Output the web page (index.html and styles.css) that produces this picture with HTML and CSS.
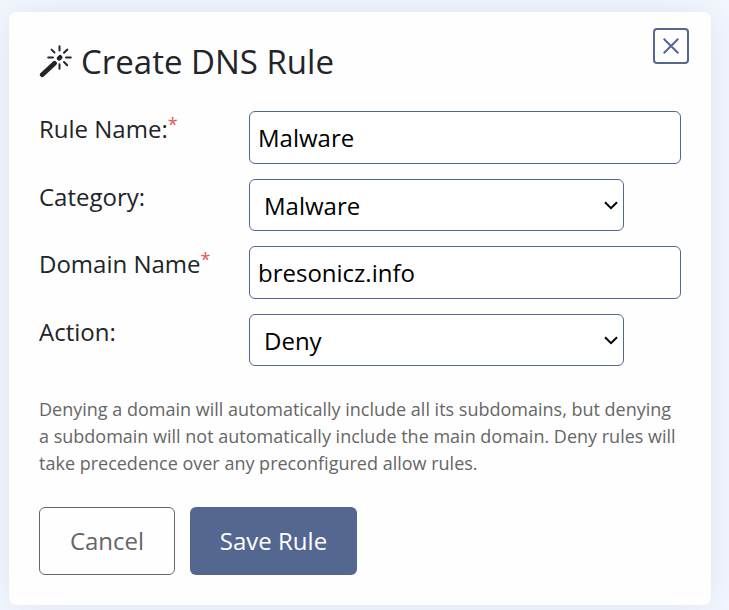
FILE: index.html
```
<!DOCTYPE html>
<html lang="en">
<head>
<meta charset="utf-8">
<title>Create DNS Rule</title>
<link rel="stylesheet" href="styles.css">
</head>
<body>
<main class="dialog">
  <header class="dialog-header">
    <h1 class="title">
      <svg class="wand" viewBox="0 0 34 34" aria-hidden="true">
        <path class="handle" d="M3.2 29.8 15.6 18.2M20.1 13.3l1-1"/>
        <path class="rays" d="M20.5 1.2v4.2M20.5 19.2v4.6M9.2 12.5h4.8M27 12.5h4.8M12.6 4.6l2.9 2.9M28.4 4.6l-3.4 3.2M25 17l3.2 3.2"/>
      </svg>
      <span>Create DNS Rule</span>
    </h1>
    <button class="close" type="button" aria-label="Close">
      <svg class="close-icon" viewBox="0 0 16 16"><path d="M.7.7l14.6 14.6M15.3.7.7 15.3"/></svg>
    </button>
  </header>
  <form class="form">
    <label class="label" for="name">Rule Name:<span class="required">*</span></label>
    <input class="field" id="name" type="text" value="Malware">
    <label class="label" for="category">Category:</label>
    <div class="select-wrap">
      <select class="field select" id="category"><option>Malware</option></select>
      <svg class="chevron" viewBox="0 0 14 9"><path d="M1 1.2l6 6 6-6"/></svg>
    </div>
    <label class="label" for="domain">Domain Name<span class="required">*</span></label>
    <input class="field" id="domain" type="text" value="bresonicz.info">
    <label class="label" for="action">Action:</label>
    <div class="select-wrap">
      <select class="field select" id="action"><option>Deny</option></select>
      <svg class="chevron" viewBox="0 0 14 9"><path d="M1 1.2l6 6 6-6"/></svg>
    </div>
  </form>
  <p class="help">Denying a domain will automatically include all its subdomains, but denying a subdomain will not automatically include the main domain. Deny rules will take precedence over any preconfigured allow rules.</p>
  <footer class="actions">
    <button class="button cancel" type="button">Cancel</button>
    <button class="button save" type="button">Save Rule</button>
  </footer>
</main>
</body>
</html>
```
FILE: styles.css
```
* { box-sizing: border-box; }
body {
  margin: 0;
  height: 610px;
  overflow: hidden;
  padding: 12px 18px 5px 9px;
  background: #f3f7ff;
  font-family: "Open Sans", sans-serif;
  color: #212529;
}
button, input, select { font-family: inherit; margin: 0; }
.dialog {
  height: 593px;
  padding: 16px 30px 30px;
  background: #fefefe;
  border-radius: 8px;
  box-shadow: 0 0 38px rgba(83, 103, 145, .14);
}
.dialog-header {
  display: flex;
  justify-content: space-between;
  height: 83px;
  margin-right: -8px;
}
.title {
  display: flex;
  align-items: flex-start;
  gap: 8px;
  margin: 0;
  padding-top: 11px;
  font-size: 33px;
  line-height: 46px;
  font-weight: 400;
  white-space: nowrap;
}
.wand { width: 34px; height: 34px; margin-top: 6px; fill: none; stroke: #212529; }
.handle { stroke-width: 4.6; stroke-linecap: round; }
.rays { stroke-width: 2; stroke-linecap: round; }
.close {
  display: grid;
  place-items: center;
  width: 36px;
  height: 36px;
  padding: 0;
  background: #fff;
  border: 2px solid #536791;
  border-radius: 4px;
}
.close-icon { width: 16px; height: 16px; fill: none; stroke: #536791; stroke-width: 2; }
.form {
  display: grid;
  grid-template-columns: 210px 432px;
  grid-template-rows: 53px 52px 53px 52px;
  row-gap: 15px;
}
.label { padding-top: 1px; font-size: 24px; line-height: 33px; white-space: nowrap; }
.required {
  position: relative;
  top: -7px;
  font-size: 18px;
  line-height: 0;
  color: #e45757;
}
.field {
  width: 100%;
  height: 100%;
  padding: 0 8px 1px;
  color: #000;
  background: #fff;
  border: 1px solid #536791;
  border-radius: 6px;
  font-size: 24px;
  outline: none;
}
.select-wrap { position: relative; width: 375px; }
.select { appearance: none; padding: 1px 8px 0 14px; display: block; }
.chevron {
  position: absolute;
  right: 6px;
  top: 22px;
  width: 14px;
  height: 9px;
  fill: none;
  stroke: #000;
  stroke-width: 2;
  pointer-events: none;
}
.help {
  margin: 30px 0 0;
  font-size: 18px;
  line-height: 27px;
  color: #666;
}
.actions { display: flex; gap: 15px; margin-top: 30px; }
.button { height: 68px; padding: 0 0 2px; border-radius: 6px; font-size: 24px; }
.cancel { width: 136px; color: #666; background: #fefefe; border: 1px solid #666; }
.save { width: 167px; color: #fff; background: #536791; border: 0; }
```
